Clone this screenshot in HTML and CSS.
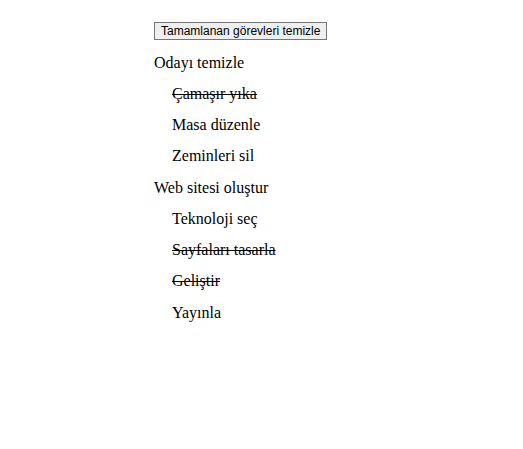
FILE: index.html
```html
<!DOCTYPE html>
<html lang="tr">
<head>
<meta charset="utf-8">
<title>Görevler</title>
<link rel="stylesheet" href="styles.css">
</head>
<body>
<div class="app">
  <button class="clear-btn">Tamamlanan görevleri temizle</button>
  <ul class="tasks">
    <li class="task">Odayı temizle</li>
    <li>
      <ul class="subtasks">
        <li class="task done">Çamaşır yıka</li>
        <li class="task">Masa düzenle</li>
        <li class="task">Zeminleri sil</li>
      </ul>
    </li>
    <li class="task">Web sitesi oluştur</li>
    <li>
      <ul class="subtasks">
        <li class="task">Teknoloji seç</li>
        <li class="task done">Sayfaları tasarla</li>
        <li class="task done">Geliştir</li>
        <li class="task">Yayınla</li>
      </ul>
    </li>
  </ul>
</div>
</body>
</html>
```
FILE: styles.css
```css
body {
  margin: 8px;
  font-family: "Liberation Serif", "Times New Roman", serif;
  font-size: 16px;
  color: #000;
  background: #fff;
}
.app {
  margin-left: 146px;
  padding-top: 14px;
}
.clear-btn {
  display: block;
  margin: 0;
  padding: 1px 6px;
  border: 1px solid #767676;
  border-radius: 0;
  background: #efefef;
  color: #000;
  font-family: "Liberation Sans", Arial, sans-serif;
  font-size: 12px;
  line-height: 14px;
}
.tasks, .subtasks {
  list-style: none;
  margin: 0;
  padding: 0;
}
.tasks {
  margin-top: 7px;
}
.subtasks {
  padding-left: 18px;
}
.task {
  padding: 6.625px 0;
  line-height: 18px;
}
.done {
  text-decoration: line-through;
}
```
